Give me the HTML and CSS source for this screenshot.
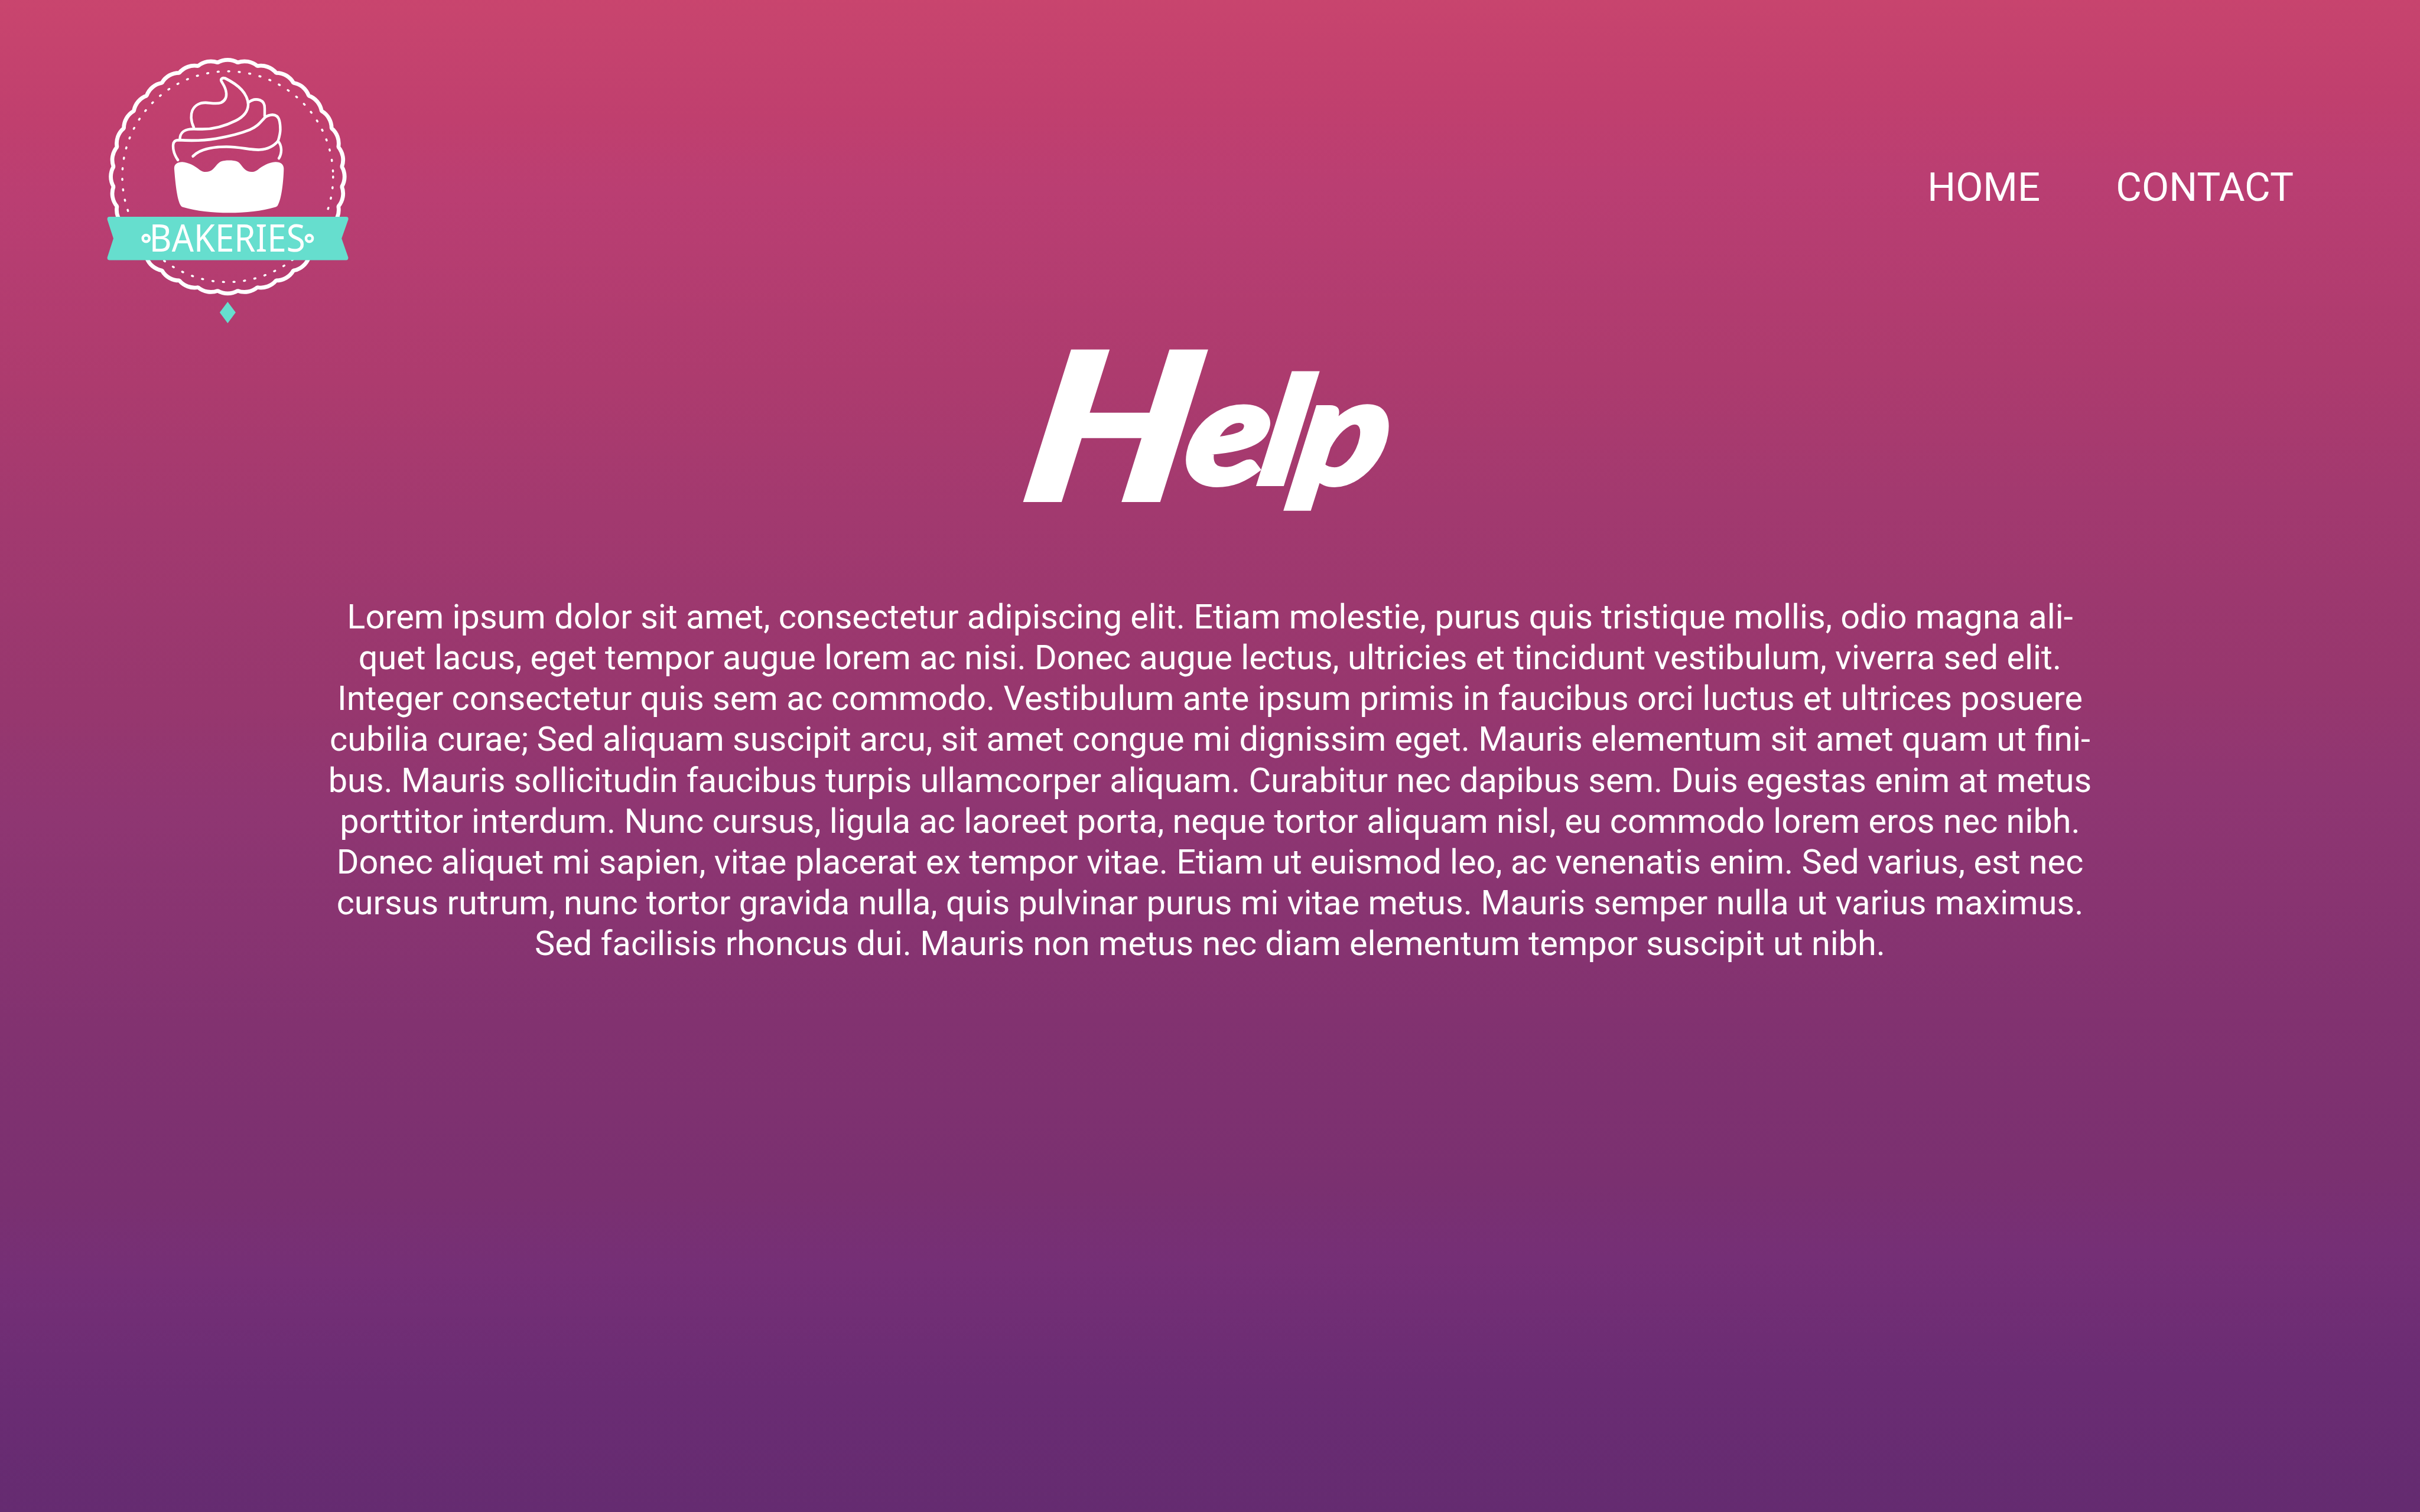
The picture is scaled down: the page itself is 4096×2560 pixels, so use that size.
FILE: index.html
```html
<!DOCTYPE html>
<html lang="en">
<head>
<meta charset="utf-8">
<title>Bakeries - Help</title>
<link rel="stylesheet" href="styles.css">
</head>
<body>
<header class="header">
  <a class="logo">
    <svg class="logo-art" viewBox="0 0 1568 1672.5">
      <g transform="translate(787 755.7)" fill="none" stroke="#fff">
        <path stroke-width="23" stroke-linejoin="bevel" d="M-57.5-657.5A114 114 0 0 1 57.5-657.5A114 114 0 0 1 170.8-637.5A114 114 0 0 1 278.9-598.2A114 114 0 0 1 378.6-540.6A114 114 0 0 1 466.7-466.7A114 114 0 0 1 540.6-378.6A114 114 0 0 1 598.2-278.9A114 114 0 0 1 637.5-170.8A114 114 0 0 1 657.5-57.5A114 114 0 0 1 657.5 57.5A114 114 0 0 1 637.5 170.8A114 114 0 0 1 598.2 278.9A114 114 0 0 1 540.6 378.6A114 114 0 0 1 466.7 466.7A114 114 0 0 1 378.6 540.6A114 114 0 0 1 278.9 598.2A114 114 0 0 1 170.8 637.5A114 114 0 0 1 57.5 657.5A114 114 0 0 1-57.5 657.5A114 114 0 0 1-170.8 637.5A114 114 0 0 1-278.9 598.2A114 114 0 0 1-378.6 540.6A114 114 0 0 1-466.7 466.7A114 114 0 0 1-540.6 378.6A114 114 0 0 1-598.2 278.9A114 114 0 0 1-637.5 170.8A114 114 0 0 1-657.5 57.5A114 114 0 0 1-657.5-57.5A114 114 0 0 1-637.5-170.8A114 114 0 0 1-598.2-278.9A114 114 0 0 1-540.6-378.6A114 114 0 0 1-466.7-466.7A114 114 0 0 1-378.6-540.6A114 114 0 0 1-278.9-598.2A114 114 0 0 1-170.8-637.5A114 114 0 0 1-57.5-657.5Z"/>
        <circle r="607" stroke-width="12" stroke-linecap="round" stroke-dasharray="6 54.9"/>
      </g>
      <g transform="scale(1 1.0667)">
        <g fill="none" stroke="#fff" stroke-width="15" stroke-linecap="round" stroke-linejoin="round">
          <path d="M592 443C572 405 575 370 583 352C597 322 627 308 661 309C695 311 725 317 748 309C769 300 781 283 779 258C776 225 759 209 750 192C745 180 757 173 772 177C800 190 843 214 868 240C888 260 905 292 905 320C903 365 868 390 833 406C765 438 700 452 640 452C615 452 590 450 570 452C540 455 511 470 512 507"/>
          <path d="M907 308C925 293 950 288 973 295C992 302 1001 318 1000 340V382"/>
          <path d="M500 618C478 588 471 565 473 537C475 518 485 511 505 511C560 514 645 515 720 503C795 491 860 476 915 455C958 438 974 416 997 393C1016 374 1052 369 1070 382C1085 393 1090 425 1090 455C1089 480 1083 497 1077 516C1052 544 1017 561 970 563C915 565 860 547 780 547C700 547 625 561 587 598"/>
          <path d="M1077 516C1097 538 1103 577 1082 609"/>
        </g>
        <path fill="#fff" d="M479 664C479 640 498 629 525 629C561 631 598 650 625 671C645 687 680 686 700 670C720 653 729 634 750 626C770 618 820 618 840 626C860 633 867 653 887 670C908 687 939 687 960 671C987 651 1022 631 1061 629C1092 628 1110 642 1110 666C1108 735 1098 826 1076 862C1072 869 1068 871 1060 873C910 914 680 914 530 873C522 871 519 868 515 862C494 826 485 735 479 664Z"/>
        <path fill="#66dece" d="M105 925H1469Q1485 925 1481 941L1443 1042L1481 1144Q1483 1159 1469 1159H105Q92 1159 94 1144L129 1042L94 941Q92 925 105 925Z"/>
        <path fill="#66dece" d="M787 1384L833 1442L787 1500L741 1442Z"/>
        <g fill="none" stroke="#fff" stroke-width="15"><ellipse cx="317" cy="1042" rx="19" ry="17.5"/><ellipse cx="1257" cy="1042" rx="19" ry="17.5"/></g>
      </g>
      <text class="logo-name" x="336" y="1186" textLength="898" lengthAdjust="spacingAndGlyphs">BAKERIES</text>
    </svg>
  </a>
  <nav class="nav"><a>HOME</a><a>CONTACT</a></nav>
</header>
<main class="main">
  <h1 class="title"><span class="title-text">H<span class="title-rest">elp</span></span></h1>
  <p class="copy">
    <span>Lorem ipsum dolor sit amet, consectetur adipiscing elit. Etiam molestie, purus quis tristique mollis, odio magna ali-</span>
    <span>quet lacus, eget tempor augue lorem ac nisi. Donec augue lectus, ultricies et tincidunt vestibulum, viverra sed elit.</span>
    <span>Integer consectetur quis sem ac commodo. Vestibulum ante ipsum primis in faucibus orci luctus et ultrices posuere</span>
    <span>cubilia curae; Sed aliquam suscipit arcu, sit amet congue mi dignissim eget. Mauris elementum sit amet quam ut fini-</span>
    <span>bus. Mauris sollicitudin faucibus turpis ullamcorper aliquam. Curabitur nec dapibus sem. Duis egestas enim at metus</span>
    <span>porttitor interdum. Nunc cursus, ligula ac laoreet porta, neque tortor aliquam nisl, eu commodo lorem eros nec nibh.</span>
    <span>Donec aliquet mi sapien, vitae placerat ex tempor vitae. Etiam ut euismod leo, ac venenatis enim. Sed varius, est nec</span>
    <span>cursus rutrum, nunc tortor gravida nulla, quis pulvinar purus mi vitae metus. Mauris semper nulla ut varius maximus.</span>
    <span>Sed facilisis rhoncus dui. Mauris non metus nec diam elementum tempor suscipit ut nibh.</span>
  </p>
</main>
</body>
</html>
```
FILE: styles.css
```css
* { box-sizing: border-box; }
body {
  margin: 0;
  height: 2560px;
  overflow: hidden;
  color: #fff;
  font-family: Roboto, sans-serif;
  background: linear-gradient(179.4deg, #c9456e 0%, #c03f6e 8%, #ba3e72 13%, #ad3b6e 25%, #a2396f 34%, #97376e 46%, #8f3672 53%, #823270 67%, #7a3070 78%, #752f76 83%, #6a2c73 91%, #642b70 100%);
}
.header {
  display: flex;
  justify-content: space-between;
  height: 540px;
  padding: 77px 214px 0 154px;
}
.logo-art { display: block; width: 461px; height: 491.6px; }
.logo-name { font-family: "Noto Sans", sans-serif; font-size: 215px; fill: #fff; }
.nav {
  display: flex;
  gap: 128px;
  padding-top: 200px;
  font-size: 67.2px;
  line-height: 80px;
}
.title {
  display: flex;
  justify-content: center;
  margin: 0;
  height: 470px;
  font: italic 900 345px/1 Lato, sans-serif;
}
.title-text {
  height: 345px;
  letter-spacing: -8px;
  transform: skewX(-10deg) scaleX(1.12);
  -webkit-text-stroke: 8px #fff;
}
.title-rest { font-size: 250px; vertical-align: 27px; }
.copy {
  margin: 0;
  text-align: center;
  white-space: nowrap;
  font-size: 57.6px;
  line-height: 69.12px;
}
.copy span { display: block; }
```
